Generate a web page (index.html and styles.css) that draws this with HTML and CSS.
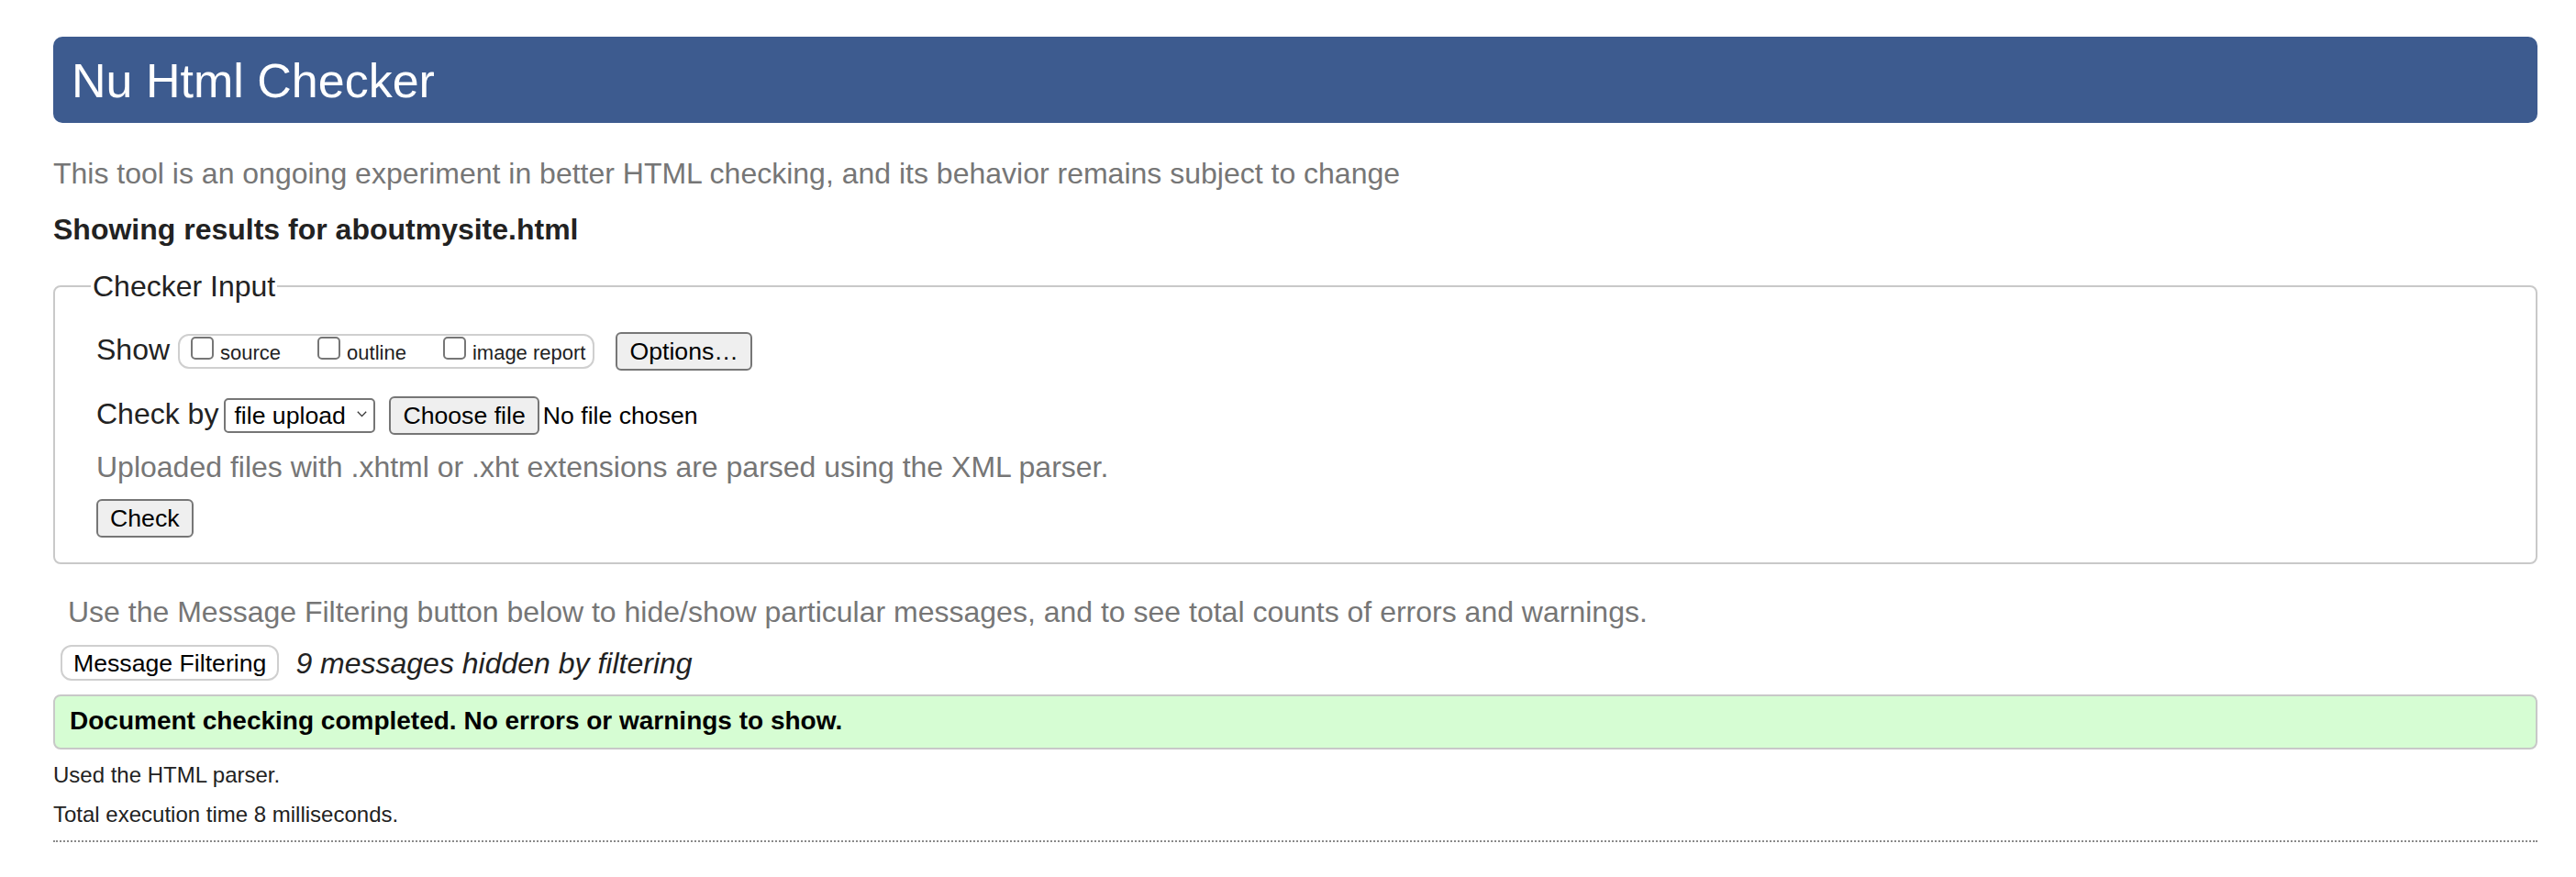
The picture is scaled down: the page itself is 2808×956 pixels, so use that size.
FILE: index.html
```html
<!DOCTYPE html>
<html lang="en">
<head>
<meta charset="utf-8">
<title>Nu Html Checker</title>
<link rel="stylesheet" href="styles.css">
</head>
<body>
<h1 class="title">Nu Html Checker</h1>
<p class="intro">This tool is an ongoing experiment in better HTML checking, and its behavior remains subject to change</p>
<p class="showing">Showing results for aboutmysite.html</p>
<fieldset class="checker">
  <legend class="checker-legend">Checker Input</legend>
  <div class="row row-show">
    <span class="row-label label-show">Show</span>
    <span class="show-group">
      <label class="opt"><input type="checkbox" class="cb"><span class="opt-text">source</span></label>
      <label class="opt"><input type="checkbox" class="cb"><span class="opt-text">outline</span></label>
      <label class="opt"><input type="checkbox" class="cb"><span class="opt-text">image report</span></label>
    </span>
    <button type="button" class="btn btn-options">Options…</button>
  </div>
  <div class="row row-checkby">
    <span class="row-label label-checkby">Check by</span>
    <span class="select">
      <span class="select-text">file upload</span>
      <svg class="chev" width="11" height="7" viewBox="0 0 11 7" aria-hidden="true"><path d="M0.8 0.8 L5.5 5.6 L10.2 0.8" fill="none" stroke="#333" stroke-width="1.3"/></svg>
    </span>
    <button type="button" class="btn btn-choose">Choose file</button>
    <span class="nofile">No file chosen</span>
  </div>
  <p class="hint">Uploaded files with .xhtml or .xht extensions are parsed using the XML parser.</p>
  <div class="row row-check">
    <button type="submit" class="btn btn-check">Check</button>
  </div>
</fieldset>
<p class="filter-note">Use the Message Filtering button below to hide/show particular messages, and to see total counts of errors and warnings.</p>
<div class="filter-row">
  <button type="button" class="btn-filter">Message Filtering</button>
  <span class="hidden-count">9 messages hidden by filtering</span>
</div>
<p class="success">Document checking completed. No errors or warnings to show.</p>
<p class="meta meta-parser">Used the HTML parser.</p>
<p class="meta meta-time">Total execution time 8 milliseconds.</p>
<hr class="end-rule">
</body>
</html>
```
FILE: styles.css
```css
html {
  background: #fff;
}

body {
  margin: 0;
  padding: 40px 42px 0 58px;
  font-family: "Liberation Sans", Arial, Helvetica, sans-serif;
  font-size: 32px;
  line-height: 36px;
  color: #222;
}

.title {
  margin: 0;
  padding: 18px 20px 16px;
  background: #3d5b8f;
  color: #fff;
  font-size: 52px;
  font-weight: normal;
  line-height: 60px;
  border-radius: 10px;
}

.intro {
  margin: 37px 0 0;
  color: #767676;
}

.showing {
  margin: 25px 0 0;
  font-weight: bold;
  color: #222;
}

.checker {
  margin: 26px 0 0;
  padding: 32px 20px 27px 45px;
  border: 2px solid #c9c9c9;
  border-radius: 8px;
  min-width: 0;
}

.checker-legend {
  margin-left: -6px;
  padding: 0 2px;
  font-size: 32px;
  line-height: 36px;
  color: #222;
}

.row {
  display: flex;
  align-items: baseline;
}

.row-checkby {
  margin-top: 28px;
}

.row-label {
  font-size: 32px;
  line-height: 36px;
  color: #222;
}

.label-show {
  margin-right: 9px;
}

.label-checkby {
  margin-right: 6px;
}

.show-group {
  display: inline-flex;
  align-items: baseline;
  box-sizing: border-box;
  height: 38px;
  padding: 0 8px 0 12px;
  border: 2px solid #cfcfcf;
  border-radius: 12px;
}

.opt {
  display: inline-flex;
  align-items: baseline;
  margin-right: 40px;
}

.opt:last-child {
  margin-right: 0;
}

.cb {
  -webkit-appearance: none;
  appearance: none;
  box-sizing: border-box;
  width: 25px;
  height: 25px;
  margin: 1px 7px 0 0;
  border: 2px solid #767676;
  border-radius: 5px;
  background: #fff;
}

.opt-text {
  font-size: 22px;
  line-height: 26px;
  color: #222;
}

.btn {
  box-sizing: border-box;
  margin: 0;
  padding: 4px 13px;
  font-family: "Liberation Sans", Arial, Helvetica, sans-serif;
  font-size: 26.67px;
  line-height: 30px;
  color: #000;
  background: #efefef;
  border: 2px solid #767676;
  border-radius: 6px;
}

.btn-options {
  margin-left: 23px;
}

.select {
  display: inline-flex;
  align-items: center;
  justify-content: space-between;
  box-sizing: border-box;
  width: 165px;
  height: 38px;
  padding: 0 7px 0 9px;
  border: 2px solid #767676;
  border-radius: 5px;
  background: #fff;
  font-size: 26.67px;
  line-height: 30px;
  color: #000;
}

.chev {
  display: block;
  margin-top: -4px;
}

.btn-choose {
  margin-left: 15px;
}

.nofile {
  margin-left: 4px;
  font-size: 26.67px;
  line-height: 30px;
  color: #000;
}

.hint {
  margin: 17px 0 0;
  color: #767676;
}

.row-check {
  margin-top: 17px;
}

.filter-note {
  margin: 34px 0 0;
  padding-left: 16px;
  color: #767676;
}

.filter-row {
  display: flex;
  align-items: center;
  margin-top: 18px;
  padding-left: 8px;
}

.btn-filter {
  box-sizing: border-box;
  margin: 0;
  padding: 3px 12px 2px;
  font-family: "Liberation Sans", Arial, Helvetica, sans-serif;
  font-size: 26.67px;
  line-height: 30px;
  color: #000;
  background: #fff;
  border: 2px solid #cfcfcf;
  border-radius: 12px;
}

.hidden-count {
  margin-left: 18px;
  font-style: italic;
  color: #222;
}

.success {
  margin: 15px 0 0;
  padding: 11px 16px 13px;
  border: 2px solid #c8c8c8;
  border-radius: 8px;
  background: #d6fdd3;
  font-size: 28px;
  line-height: 32px;
  font-weight: bold;
  color: #000;
}

.meta {
  margin: 14px 0 0;
  font-size: 24px;
  line-height: 28px;
  color: #222;
}

.meta-time {
  margin-top: 15px;
}

.end-rule {
  margin: 14px 0 0;
  height: 0;
  border: 0;
  border-top: 2px dotted #8a8a8a;
}
```
